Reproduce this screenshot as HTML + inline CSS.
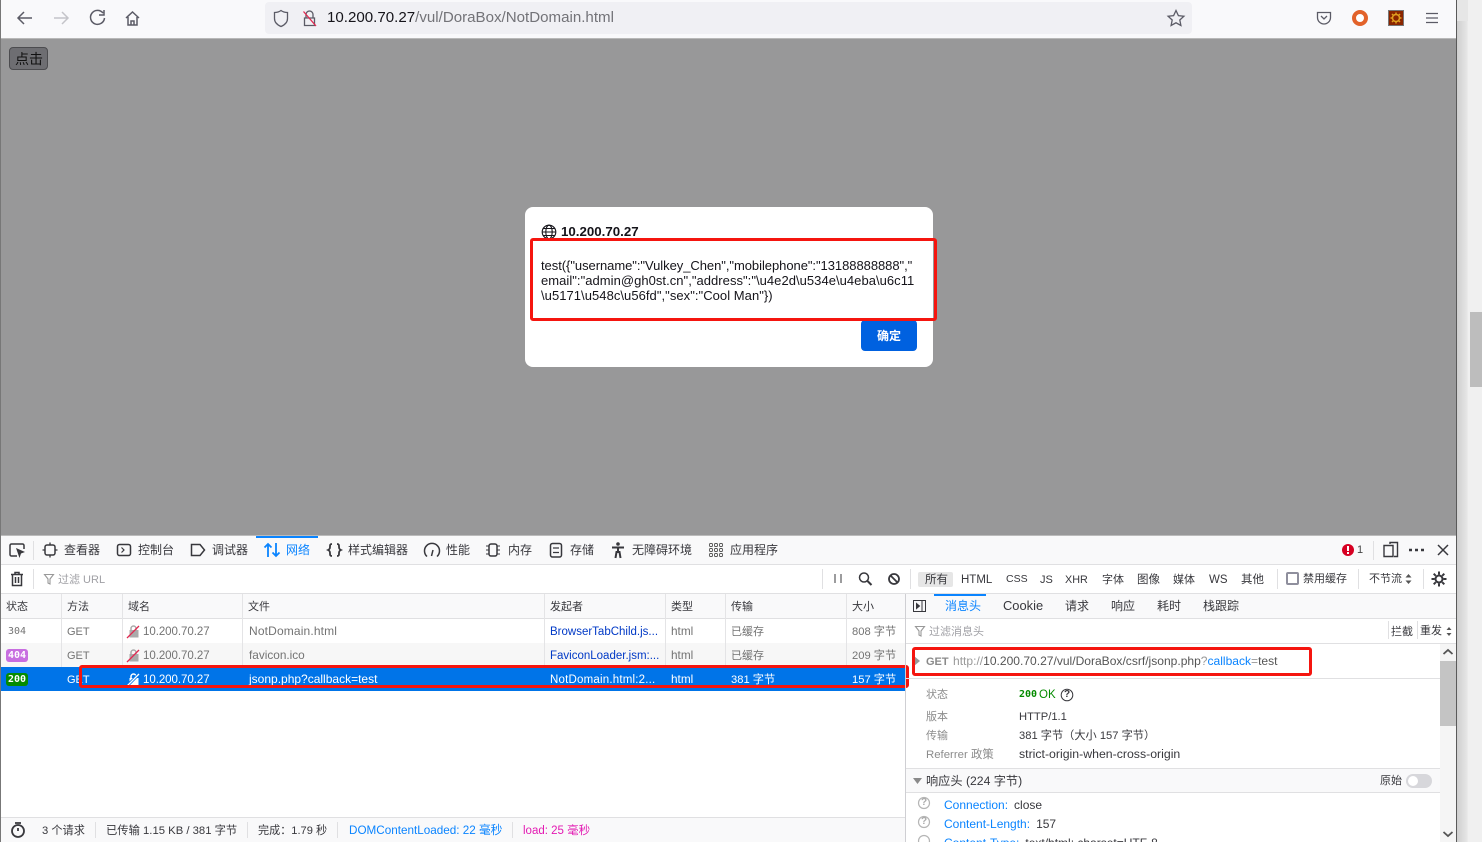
<!DOCTYPE html>
<html lang="zh"><head><meta charset="utf-8"><title>NotDomain</title>
<style>
html,body{margin:0;padding:0;width:1482px;height:842px;overflow:hidden;background:#fff}
body{position:relative;font-family:"Liberation Sans","Noto Sans CJK SC",sans-serif;font-size:12px;color:#38383d}
.a{position:absolute}
.t{position:absolute;white-space:nowrap;line-height:16px;height:16px}
svg{position:absolute;overflow:visible;fill:none}
.g{color:#737373}.b{color:#0039c6}.w{color:#fff}
.hl{position:absolute;border:3px solid #f5150f;border-radius:3px;box-sizing:border-box}
</style></head><body>
<!-- right strip -->
<div class="a" style="left:1457px;top:0;width:25px;height:842px;background:linear-gradient(90deg,#cfcfcf,#e6e6e6 40%,#f0f0f0 45%)"></div>
<div class="a" style="left:1457px;top:0;width:11px;height:21px;background:#e6e6e6"></div>
<div class="a" style="left:1470px;top:312px;width:12px;height:75px;background:#bdbdbd"></div>
<div class="a" style="left:1456px;top:0;width:1px;height:842px;background:#5a5a5a"></div>
<div class="a" style="left:0;top:0;width:1px;height:842px;background:#777"></div>
<!-- toolbar -->
<div class="a" style="left:1px;top:0;width:1455px;height:38px;background:#f9f9fb"></div>
<div class="a" style="left:1px;top:38px;width:1455px;height:1px;background:#b8b8b8"></div>
<svg style="left:0;top:0" width="150" height="38" stroke="#5b5b66" stroke-width="1.5">
<path d="M32 18H18M24 12l-6 6 6 6"/>
<path d="M54 18h14M62 12l6 6-6 6" stroke="#c4c4c9"/>
<path d="M103 13a7 7 0 1 0 1.5 5M104 10v5h-5"/>
<path d="M126 18l6.500-6 6.500 6M128 17v8h9v-8M131 25v-4h3v4"/>
</svg>
<div class="a" style="left:265px;top:2px;width:927px;height:32px;background:#f0f0f4;border-radius:4px"></div>
<svg style="left:270px;top:6px" width="50" height="26" stroke="#5b5b66" stroke-width="1.300">
<path d="M11 4.500c2 1.500 4 2 6.500 2v6c0 4-3 6.500-6.500 8-3.500-1.500-6.500-4-6.500-8v-6c2.500 0 4.500-.5 6.500-2z"/>
<path d="M36 12V8.500a3.500 3.500 0 0 1 7 0V12M34.500 12h10v7.500h-10z"/>
<path d="M33.500 5.500l12.500 14.500" stroke="#e22850"/>
</svg>
<div class="t" style="left:327px;top:9px;font-size:15.100px;line-height:18px;height:18px;color:#737378"><span style="color:#15141a">10.200.70.27</span>/vul/DoraBox/NotDomain.html</div>
<svg style="left:1166px;top:9px" width="20" height="18" stroke="#5b5b66" stroke-width="1.300"><path d="M10 1.500l2.400 5.100 5.500.6-4.100 3.800 1.100 5.500L10 13.800l-4.900 2.700 1.100-5.500L2.100 7.200l5.500-.6z"/></svg>
<svg style="left:1316px;top:10px" width="16" height="16" stroke="#5b5b66" stroke-width="1.300"><path d="M1.500 2.500h13v5a6.500 6.500 0 0 1-13 0zM5 6l3 3 3-3"/></svg>
<div class="a" style="left:1352px;top:10px;width:16px;height:16px;border:4px solid #e2622a;border-radius:50%;box-sizing:border-box;background:#fff"></div>
<div class="a" style="left:1388px;top:10px;width:16px;height:16px;background:#8a2500;border:1px solid #777;box-sizing:border-box"></div>
<svg style="left:1388px;top:10px" width="16" height="16" stroke="#e0a020" stroke-width="1.500"><circle cx="8" cy="8" r="3.500"/><path d="M8 2.500v2M8 11.500v2M2.500 8h2M11.500 8h2M4 4l1.500 1.500M10.500 10.500L12 12M12 4l-1.500 1.500M5.500 10.500L4 12"/></svg>
<svg style="left:1426px;top:12px" width="13" height="12" stroke="#5b5b66" stroke-width="1.200"><path d="M0 1.500h12M0 6h12M0 10.500h12"/></svg>
<!-- page -->
<div class="a" style="left:1px;top:39px;width:1455px;height:496px;background:#989899"></div>
<div class="a" style="left:9px;top:47px;width:39px;height:23px;background:#6e6e72;border:1px solid #4c4c4f;border-radius:4px;box-sizing:border-box"></div>
<div class="t" style="left:15px;top:51px;font-size:14px;color:#111">点击</div>
<!-- dialog -->
<div class="a" style="left:525px;top:207px;width:408px;height:160px;background:#fff;border-radius:8px"></div>
<svg style="left:541px;top:224px" width="16" height="16" stroke="#15141a" stroke-width="1.100"><circle cx="8" cy="8" r="6.800"/><ellipse cx="8" cy="8" rx="3.200" ry="6.800"/><path d="M1.200 8h13.600M2.200 4.500h11.600M2.200 11.500h11.600"/></svg>
<div class="t" style="left:561px;top:224px;font-size:13.300px;font-weight:bold;color:#15141a">10.200.70.27</div>
<div class="a" style="left:541px;top:258px;width:380px;font-size:13px;line-height:15px;color:#15141a;white-space:nowrap"><span style="letter-spacing:-.05px">test({"username":"Vulkey_Chen","mobilephone":"13188888888","</span><br><span style="letter-spacing:.04px">email":"admin@gh0st.cn","address":"\u4e2d\u534e\u4eba\u6c11</span><br><span style="letter-spacing:.05px">\u5171\u548c\u56fd","sex":"Cool Man"})</span></div>
<div class="a" style="left:861px;top:320px;width:56px;height:31px;background:#0061e0;border-radius:4px"></div>
<div class="t" style="left:877px;top:328px;font-weight:bold;color:#fff">确定</div>
<div class="hl" style="left:530px;top:238px;width:407px;height:83px"></div>
<!-- devtools -->
<div class="a" style="left:1px;top:535px;width:1455px;height:1px;background:#bbb"></div>
<div class="a" style="left:1px;top:536px;width:1455px;height:28px;background:#f9f9fa"></div>
<div class="a" style="left:1px;top:564px;width:1455px;height:1px;background:#e0e0e2"></div>
<div class="a" style="left:256px;top:536px;width:62px;height:2px;background:#0a84ff"></div>
<div class="a" style="left:33px;top:541px;width:1px;height:19px;background:#e0e0e2"></div>
<svg style="left:0;top:536px" width="780" height="28" stroke="#38383d" stroke-width="1.500">
<path d="M17 20H11.500a1.500 1.500 0 0 1-1.500-1.500v-9A1.500 1.500 0 0 1 11.500 8h11A1.500 1.500 0 0 1 24 9.500V13"/><path d="M16 12l9 4-4 1.500L19.500 22z" fill="#38383d" stroke="none"/>
<rect x="45" y="9" width="10" height="10" rx="2"/><path d="M50 6.500V9M50 19v2.500M42.500 14H45M55 14h2.500" stroke-width="1.300"/>
<rect x="117.500" y="8.500" width="13" height="11" rx="2"/><path d="M121.500 11.500l2.500 2.500-2.500 2.500" stroke-width="1.200"/>
<path d="M191.500 8.500H200l4.500 5.500-4.500 5.500h-8.500z"/>
<path d="M268 21V8M264.500 11.500L268 8l3.500 3.500M276 7v13M272.500 16.500L276 20l3.500-3.500" stroke="#0a84ff" stroke-width="1.800"/>
<path d="M332 8c-2 0-2 1-2 2.500s0 2.500-2 3.500c2 1 2 2 2 3.500s0 2.500 2 2.500M337 8c2 0 2 1 2 2.500s0 2.500 2 3.500c-2 1-2 2-2 3.500s0 2.500-2 2.500" stroke-width="1.800"/>
<path d="M427 20.500a7.500 7.500 0 1 1 10 0M431.500 20l1.500-6"/>
<rect x="489" y="8" width="8" height="12" rx="2"/><path d="M486 10h3M486 14h3M486 18h3M497 10h3M497 14h3M497 18h3" stroke-width="1"/>
<rect x="550.500" y="7.500" width="11" height="13.500" rx="2"/><path d="M553 12h6M553 16.500h6" stroke-width="1.200"/>
<circle cx="618" cy="8" r="1.800" fill="#38383d" stroke="none"/><path d="M612 11.500h12M618 11v5M615.500 22l1-6h3l1 6" stroke-width="2"/>
<g stroke-width=".9" stroke="#555"><rect x="709.500" y="7.500" width="3" height="3" rx="1"/><rect x="714.500" y="7.500" width="3" height="3" rx="1"/><rect x="719.500" y="7.500" width="3" height="3" rx="1"/><rect x="709.500" y="12.500" width="3" height="3" rx="1"/><rect x="714.500" y="12.500" width="3" height="3" rx="1"/><rect x="719.500" y="12.500" width="3" height="3" rx="1"/><rect x="709.500" y="17.500" width="3" height="3" rx="1"/><rect x="714.500" y="17.500" width="3" height="3" rx="1"/><rect x="719.500" y="17.500" width="3" height="3" rx="1"/></g>
</svg>
<div class="t" style="left:64px;top:542px">查看器</div>
<div class="t" style="left:138px;top:542px">控制台</div>
<div class="t" style="left:212px;top:542px">调试器</div>
<div class="t" style="left:286px;top:542px;color:#0a84ff">网络</div>
<div class="t" style="left:348px;top:542px">样式编辑器</div>
<div class="t" style="left:446px;top:542px">性能</div>
<div class="t" style="left:508px;top:542px">内存</div>
<div class="t" style="left:570px;top:542px">存储</div>
<div class="t" style="left:632px;top:542px">无障碍环境</div>
<div class="t" style="left:730px;top:542px">应用程序</div>
<div class="a" style="left:1342px;top:544px;width:12px;height:12px;border-radius:50%;background:#d70022"></div>
<div class="a" style="left:1347px;top:546px;width:2px;height:5px;background:#fff"></div>
<div class="a" style="left:1347px;top:552px;width:2px;height:2px;background:#fff"></div>
<div class="t" style="left:1357px;top:542px;font-size:11px;color:#444">1</div>
<div class="a" style="left:1373px;top:541px;width:1px;height:19px;background:#e0e0e2"></div>
<svg style="left:1380px;top:540px" width="80" height="20" stroke="#38383d" stroke-width="1.400"><path d="M10 4V2.500h7.500v14H14M4 5.500h9v11H4z"/><path d="M29 10h3M35 10h3M41 10h3" stroke-width="2.600"/><path d="M58 5l10 10M68 5L58 15" stroke-width="1.500"/></svg>
<!-- filter bar -->
<div class="a" style="left:1px;top:565px;width:1455px;height:28px;background:#fff"></div>
<div class="a" style="left:1px;top:593px;width:1455px;height:1px;background:#e0e0e2"></div>
<svg style="left:10px;top:571px" width="16" height="16" stroke="#38383d" stroke-width="1.500"><path d="M1 3.500h12M5 3V1.500h4V3M2.500 3.500v11h9v-11M5.500 6v6M8.500 6v6"/></svg>
<div class="a" style="left:33px;top:569px;width:1px;height:20px;background:#e0e0e2"></div>
<svg style="left:44px;top:574px" width="11" height="11" stroke="#999" stroke-width="1.100"><path d="M.5 .5h9L6 5v5L4 9V5z"/></svg>
<div class="t" style="left:58px;top:572px;font-size:11px;color:#a0a0a5">过滤 URL</div>
<div class="a" style="left:822px;top:569px;width:1px;height:20px;background:#e0e0e2"></div>
<svg style="left:834px;top:572px" width="70" height="14" stroke="#38383d"><path d="M1 2v9M7 2v9" stroke-width="1"/><circle cx="30" cy="5.500" r="4.500" stroke-width="1.500"/><path d="M33.500 9l4 4" stroke-width="2"/><circle cx="60" cy="7" r="5" stroke-width="1.800"/><path d="M56.500 3.500l7 7" stroke-width="1.800"/></svg>
<div class="a" style="left:910px;top:569px;width:1px;height:20px;background:#e0e0e2"></div>
<div class="a" style="left:918px;top:572px;width:35px;height:15px;background:#e6e6e6;border-radius:2px"></div>
<div class="t" style="left:925px;top:572px;font-size:11.500px">所有</div>
<div class="t" style="left:961px;top:572px;font-size:11.500px">HTML</div>
<div class="t" style="left:1006px;top:571px;font-size:10.500px">CSS</div>
<div class="t" style="left:1040px;top:572px;font-size:11px">JS</div>
<div class="t" style="left:1065px;top:572px;font-size:10.800px">XHR</div>
<div class="t" style="left:1102px;top:572px;font-size:11px">字体</div>
<div class="t" style="left:1137px;top:572px;font-size:11.500px">图像</div>
<div class="t" style="left:1173px;top:572px;font-size:11px">媒体</div>
<div class="t" style="left:1209px;top:572px;font-size:11.500px">WS</div>
<div class="t" style="left:1241px;top:572px;font-size:11.500px">其他</div>
<div class="a" style="left:1277px;top:569px;width:1px;height:20px;background:#e0e0e2"></div>
<div class="a" style="left:1286px;top:572px;width:13px;height:13px;border:2px solid #8f8f9d;border-radius:2px;box-sizing:border-box"></div>
<div class="t" style="left:1303px;top:571px;font-size:11px">禁用缓存</div>
<div class="a" style="left:1358px;top:569px;width:1px;height:20px;background:#e0e0e2"></div>
<div class="t" style="left:1369px;top:571px;font-size:11px">不节流</div>
<svg style="left:1405px;top:574px" width="7" height="10" fill="#555"><path d="M3.500 0L6.500 3.500h-6zM3.500 10L.5 6.500h6z" fill="#555"/></svg>
<div class="a" style="left:1423px;top:569px;width:1px;height:20px;background:#e0e0e2"></div>
<svg style="left:1431px;top:571px" width="16" height="16" stroke="#38383d"><circle cx="8" cy="8" r="3.500" stroke-width="2"/><path d="M8 .5v3M8 12.500v3M.5 8h3M12.500 8h3M2.700 2.700l2.100 2.100M11.200 11.200l2.100 2.100M13.300 2.700l-2.100 2.100M4.800 11.200l-2.100 2.100" stroke-width="2"/></svg>
<!-- table header -->
<div class="a" style="left:1px;top:594px;width:904px;height:24px;background:#f9f9fa"></div>
<div class="a" style="left:1px;top:618px;width:904px;height:1px;background:#e0e0e2"></div>
<div class="t" style="left:6px;top:599px;font-size:11px">状态</div>
<div class="t" style="left:67px;top:599px;font-size:11px">方法</div>
<div class="t" style="left:128px;top:599px;font-size:11px">域名</div>
<div class="t" style="left:248px;top:599px;font-size:11px">文件</div>
<div class="t" style="left:550px;top:599px;font-size:11px">发起者</div>
<div class="t" style="left:671px;top:599px;font-size:11px">类型</div>
<div class="t" style="left:731px;top:599px;font-size:11px">传输</div>
<div class="t" style="left:852px;top:599px;font-size:11px">大小</div>
<!-- rows -->
<div class="a" style="left:1px;top:643px;width:904px;height:24px;background:#f7f7f7"></div>
<div class="a" style="left:1px;top:667px;width:904px;height:24px;background:#0074e8"></div>
<div class="a" style="left:61px;top:594px;width:1px;height:73px;background:#e4e4e6"></div>
<div class="a" style="left:122px;top:594px;width:1px;height:73px;background:#e4e4e6"></div>
<div class="a" style="left:242px;top:594px;width:1px;height:73px;background:#e4e4e6"></div>
<div class="a" style="left:544px;top:594px;width:1px;height:73px;background:#e4e4e6"></div>
<div class="a" style="left:665px;top:594px;width:1px;height:73px;background:#e4e4e6"></div>
<div class="a" style="left:725px;top:594px;width:1px;height:73px;background:#e4e4e6"></div>
<div class="a" style="left:846px;top:594px;width:1px;height:73px;background:#e4e4e6"></div>
<div class="t g" style="left:8px;top:624px;font-size:10px;font-family:'DejaVu Sans Mono','Liberation Mono',monospace">304</div>
<div class="a" style="left:6px;top:649px;width:22px;height:13px;border-radius:3px;background:#c86ee0"></div>
<div class="t w" style="left:8px;top:648px;font-size:10px;font-weight:bold;font-family:'DejaVu Sans Mono','Liberation Mono',monospace">404</div>
<div class="a" style="left:6px;top:673px;width:22px;height:13px;border-radius:3px;background:#058b00"></div>
<div class="t w" style="left:8px;top:672px;font-size:10px;font-weight:bold;font-family:'DejaVu Sans Mono','Liberation Mono',monospace">200</div>
<div class="t g" style="left:67px;top:624px;font-size:11px">GET</div>
<div class="t g" style="left:67px;top:648px;font-size:11px">GET</div>
<div class="t w" style="left:67px;top:672px;font-size:11px">GET</div>
<svg style="left:126px;top:624px" width="14" height="62">
<path d="M5 6V4.500a2.500 2.500 0 0 1 5 0V6" stroke="#aaa" stroke-width="1.500"/><rect x="3.500" y="6" width="9" height="7.500" fill="#aaa"/><path d="M1 14L13 2" stroke="#e22850" stroke-width="1.300"/>
<path d="M5 30v-1.500a2.500 2.500 0 0 1 5 0V30" stroke="#aaa" stroke-width="1.500"/><rect x="3.500" y="30" width="9" height="7.500" fill="#aaa"/><path d="M1 38L13 26" stroke="#e22850" stroke-width="1.300"/>
<path d="M5 54v-1.500a2.500 2.500 0 0 1 5 0V54" stroke="#fff" stroke-width="1.500"/><rect x="3.500" y="54" width="9" height="7.500" fill="#fff"/><path d="M1 62L13 50" stroke="#0074e8" stroke-width="3"/><path d="M1 62L13 50" stroke="#fff" stroke-width="1.300"/>
</svg>
<div class="t g" style="left:143px;top:624px;font-size:11.500px;letter-spacing:-.05px">10.200.70.27</div>
<div class="t g" style="left:143px;top:648px;font-size:11.500px;letter-spacing:-.05px">10.200.70.27</div>
<div class="t w" style="left:143px;top:672px;font-size:11.500px;letter-spacing:-.05px">10.200.70.27</div>
<div class="t g" style="left:249px;top:623px;letter-spacing:.15px">NotDomain.html</div>
<div class="t g" style="left:249px;top:647px;font-size:11.800px">favicon.ico</div>
<div class="t w" style="left:249px;top:671px">jsonp.php?callback=test</div>
<div class="t b" style="left:550px;top:624px;font-size:11.500px">BrowserTabChild.js...</div>
<div class="t b" style="left:550px;top:648px;font-size:11.500px">FaviconLoader.jsm:...</div>
<div class="t w" style="left:550px;top:672px;font-size:11.500px;letter-spacing:.2px">NotDomain.html:2...</div>
<div class="t g" style="left:671px;top:623px;font-size:11.800px">html</div>
<div class="t g" style="left:671px;top:647px;font-size:11.800px">html</div>
<div class="t w" style="left:671px;top:671px;font-size:11.800px">html</div>
<div class="t g" style="left:731px;top:624px;font-size:11px">已缓存</div>
<div class="t g" style="left:731px;top:648px;font-size:11px">已缓存</div>
<div class="t w" style="left:731px;top:672px;font-size:11.200px">381 字节</div>
<div class="t g" style="left:852px;top:624px;font-size:11.200px">808 字节</div>
<div class="t g" style="left:852px;top:648px;font-size:11.200px">209 字节</div>
<div class="t w" style="left:852px;top:672px;font-size:11.200px">157 字节</div>
<div class="hl" style="left:79px;top:665px;width:830px;height:23px"></div>
<!-- status bar -->
<div class="a" style="left:1px;top:817px;width:904px;height:1px;background:#e0e0e2"></div>
<div class="a" style="left:1px;top:818px;width:904px;height:24px;background:#f9f9fa"></div>
<svg style="left:9px;top:821px" width="18" height="18" stroke="#38383d" stroke-width="1.800"><circle cx="9" cy="10" r="6"/><path d="M6 2h6M9 7v3" /></svg>
<div class="t" style="left:42px;top:823px;font-size:11.200px">3 个请求</div>
<div class="a" style="left:95px;top:822px;width:1px;height:16px;background:#e0e0e2"></div>
<div class="t" style="left:106px;top:823px;font-size:11.300px">已传输 1.15 KB / 381 字节</div>
<div class="a" style="left:247px;top:822px;width:1px;height:16px;background:#e0e0e2"></div>
<div class="t" style="left:258px;top:823px;font-size:11.100px">完成：1.79 秒</div>
<div class="a" style="left:337px;top:822px;width:1px;height:16px;background:#e0e0e2"></div>
<div class="t" style="left:349px;top:823px;font-size:11.700px;color:#0a84ff">DOMContentLoaded: 22 毫秒</div>
<div class="a" style="left:512px;top:822px;width:1px;height:16px;background:#e0e0e2"></div>
<div class="t" style="left:523px;top:823px;font-size:11.500px;color:#e31bb3">load: 25 毫秒</div>
<!-- side panel -->
<div class="a" style="left:905px;top:594px;width:1px;height:248px;background:#cfcfd3"></div>
<div class="a" style="left:906px;top:594px;width:550px;height:24px;background:#f9f9fa"></div>
<div class="a" style="left:906px;top:618px;width:550px;height:1px;background:#e0e0e2"></div>
<div class="a" style="left:934px;top:594px;width:52px;height:2px;background:#0a84ff"></div>
<svg style="left:913px;top:600px" width="14" height="12" stroke="#38383d" stroke-width="1"><rect x=".5" y=".5" width="12" height="11"/><path d="M9 .5v11"/><path d="M3.500 3.500l3 2.500-3 2.500z" fill="#38383d"/></svg>
<div class="t" style="left:945px;top:598px;color:#0a84ff">消息头</div>
<div class="t" style="left:1003px;top:598px;font-size:12.900px">Cookie</div>
<div class="t" style="left:1065px;top:598px">请求</div>
<div class="t" style="left:1111px;top:598px">响应</div>
<div class="t" style="left:1157px;top:598px">耗时</div>
<div class="t" style="left:1203px;top:598px">栈跟踪</div>
<svg style="left:915px;top:626px" width="11" height="11" stroke="#999" stroke-width="1.100"><path d="M.5 .5h9L6 5v5L4 9V5z"/></svg>
<div class="t" style="left:929px;top:624px;font-size:11px;color:#a0a0a5">过滤消息头</div>
<div class="a" style="left:1388px;top:621px;width:1px;height:18px;background:#e0e0e2"></div>
<div class="t" style="left:1391px;top:624px;font-size:11px">拦截</div>
<div class="a" style="left:1417px;top:621px;width:1px;height:18px;background:#e0e0e2"></div>
<div class="t" style="left:1420px;top:623px;font-size:11px">重发</div>
<svg style="left:1446px;top:627px" width="6" height="9"><path d="M3 0L5.500 3h-5zM3 9L.5 6h5z" fill="#555"/></svg>
<div class="a" style="left:906px;top:643px;width:550px;height:1px;background:#e0e0e2"></div>
<div class="a" style="left:906px;top:678px;width:534px;height:1px;background:#e0e0e2"></div>
<svg style="left:914px;top:656px" width="6" height="10"><path d="M0 0l6 5-6 5z" fill="#999"/></svg>
<div class="t" style="left:926px;top:654px;font-size:11px;font-weight:bold;color:#8a8a8a">GET</div>
<div class="t" style="left:953px;top:653px;font-size:12.050px;color:#555"><span style="color:#999">http://</span>10.200.70.27/vul/DoraBox/csrf/jsonp.php<span style="color:#999">?</span><span style="color:#0a84ff">callback</span><span style="color:#999">=</span>test</div>
<div class="hl" style="left:912px;top:647px;width:400px;height:29px"></div>
<div class="t" style="left:926px;top:687px;font-size:11px;color:#8c8c8c">状态</div>
<div class="t" style="left:1019px;top:687px;font-size:10px;font-weight:bold;color:#058b00;font-family:'DejaVu Sans Mono','Liberation Mono',monospace">200</div>
<div class="t" style="left:1039px;top:687px;font-size:11.500px;color:#058b00">OK</div>
<svg style="left:1060px;top:688px" width="14" height="14" stroke="#38383d" stroke-width="1"><circle cx="7" cy="7" r="5.800"/></svg>
<div class="t" style="left:1064px;top:687px;font-size:10px;font-weight:bold">?</div>
<div class="t" style="left:926px;top:709px;font-size:11px;color:#8c8c8c">版本</div>
<div class="t" style="left:1019px;top:709px;font-size:11.200px">HTTP/1.1</div>
<div class="t" style="left:926px;top:728px;font-size:11px;color:#8c8c8c">传输</div>
<div class="t" style="left:1019px;top:728px;font-size:11.200px">381 字节（大小 157 字节）</div>
<div class="t" style="left:926px;top:747px;font-size:11.400px;color:#8c8c8c">Referrer 政策</div>
<div class="t" style="left:1019px;top:746px;font-size:12.300px">strict-origin-when-cross-origin</div>
<div class="a" style="left:906px;top:768px;width:534px;height:25px;background:#f9f9fa;border-top:1px solid #e0e0e2;border-bottom:1px solid #e0e0e2;box-sizing:border-box"></div>
<svg style="left:913px;top:778px" width="9" height="6"><path d="M0 0h9L4.500 6z" fill="#8a8a8a"/></svg>
<div class="t" style="left:926px;top:773px;font-size:12.200px">响应头 (224 字节)</div>
<div class="t" style="left:1380px;top:773px;font-size:11px">原始</div>
<div class="a" style="left:1406px;top:774px;width:26px;height:14px;border-radius:7px;background:#d7d7db"></div>
<div class="a" style="left:1408px;top:776px;width:10px;height:10px;border-radius:50%;background:#fff"></div>
<svg style="left:917px;top:797px" width="14" height="45" stroke="#b5b5b5" stroke-width="1.200"><circle cx="7" cy="6" r="5.500"/><circle cx="7" cy="25" r="5.500"/><circle cx="7" cy="44" r="5.500"/></svg>
<div class="t" style="left:921px;top:795px;font-size:10px;color:#aaa;font-weight:bold">?</div>
<div class="t" style="left:921px;top:814px;font-size:10px;color:#aaa;font-weight:bold">?</div>
<div class="t" style="left:944px;top:797px;font-size:12px;color:#0a84ff">Connection:<span style="color:#38383d;margin-left:6px">close</span></div>
<div class="t" style="left:944px;top:816px;font-size:12px;color:#0a84ff">Content-Length:<span style="color:#38383d;margin-left:6px">157</span></div>
<div class="t" style="left:944px;top:835px;font-size:12px;color:#0a84ff">Content-Type:<span style="color:#38383d;margin-left:6px">text/html; charset=UTF-8</span></div>
<!-- inner scrollbar -->
<div class="a" style="left:1440px;top:644px;width:16px;height:198px;background:#f5f5f5"></div>
<div class="a" style="left:1440px;top:661px;width:16px;height:65px;background:#c4c4c4"></div>
<svg style="left:1442px;top:648px" width="12" height="8" stroke="#555" stroke-width="1.800"><path d="M1.500 6L6 2l4.500 4"/></svg>
<svg style="left:1442px;top:830px" width="12" height="8" stroke="#555" stroke-width="1.800"><path d="M1.500 2L6 6l4.500-4"/></svg>
</body></html>
